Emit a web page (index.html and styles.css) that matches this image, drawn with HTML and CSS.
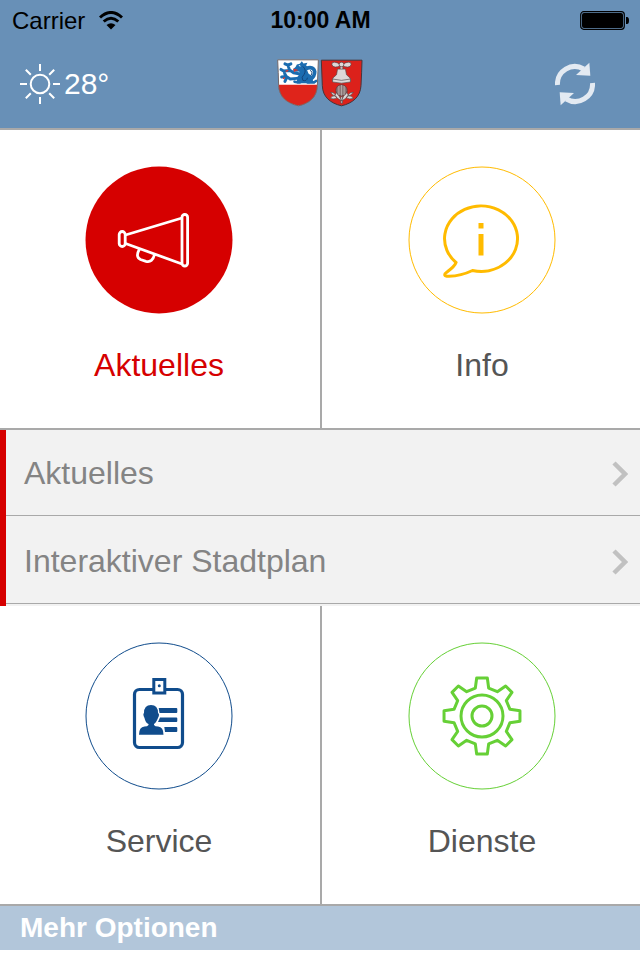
FILE: index.html
```
<!DOCTYPE html>
<html lang="de">
<head>
<meta charset="UTF-8">
<meta name="viewport" content="width=device-width, initial-scale=1">
<title>Stadt App</title>
<link rel="stylesheet" href="styles.css">
</head>
<body>
<header class="top">
  <div class="status">
    <div class="carrier">
      <span>Carrier</span>
      <svg class="wifi" viewBox="0 0 24 19" width="24" height="19">
        <path d="M1 6.5Q12-3.5 23 6.5M4.7 10.5Q12 4 19.3 10.5" fill="none" stroke="#000" stroke-width="3"/>
        <path d="M7.5 14Q12 10.5 16.5 14L12 18.5z"/>
      </svg>
    </div>
    <span class="time">10:00 AM</span>
    <svg class="battery" viewBox="0 0 49 20" width="49" height="20">
      <rect x=".7" y=".7" width="43.6" height="17.6" rx="3" fill="none" stroke="#000" stroke-width="1.2"/>
      <rect x="2" y="2" width="41" height="15" rx="2"/>
      <path d="M46 6h1q2 0 2 3.5T47 13h-1z"/>
    </svg>
  </div>
  <div class="bar">
    <div class="weather">
      <svg viewBox="0 0 40 40" width="40" height="40" fill="none" stroke="#fff" stroke-width="2">
        <circle cx="20" cy="20" r="9.3"/>
        <path d="M20 0v7M20 33v7M0 20h7M33 20h7M5.8 5.8l5 5M29.2 29.2l5 5M5.8 34.2l5-5M29.2 10.8l5-5"/>
      </svg>
      <span>28°</span>
    </div>
    <svg class="crests" viewBox="0 0 260 144" width="86" height="48">
      <path d="M2 2h123q-1 30-3 78c-1 35-25 54-57 61C30 134 6 113 5 80Q4 40 2 2z" fill="#fff"/>
      <path d="M5 77h117v6c-1 33-25 51-57 58C30 134 6 113 5 83z" fill="#df241b"/>
      <g fill="none" stroke="#1b6cb0" stroke-width="9" stroke-linecap="round" stroke-linejoin="round">
        <path d="M70 45L50 41 38 33 33 18M60 58L40 60 28 52 14 54M40 34l-20 2-8-5M33 18l-9-4M34 18l8-4M28 52l-5-9M28 58l-4 9"/>
        <path d="M92 70h20l6-4M70 70h-9l-8-2" stroke-width="8"/>
        <path d="M88 28q22-8 26 10 0 14-12 22" stroke-width="11"/>
      </g>
      <path d="M56 24l4-8 9-2 6-8 5 7 12-2-4 8 8 8-5 6 4 10 10 8 4 14-10 8H72l-12-8 2-12 8-10-3-6-10 1-9-4 2-5z" fill="#1b6cb0"/>
      <path d="M78 22q12 10 4 24-10 8-4 18 12 4 14-8M100 34q10 4 2 16" fill="none" stroke="#12457c" stroke-width="3"/>
      <path d="M62 34l-10-3 2 7M34 34l-8 3M24 56l-6 3" fill="none" stroke="#dd342b" stroke-width="4"/>
      <path d="M66 19l5 2" stroke="#fff" stroke-width="3"/>
      <path d="M2 2h123q-1 30-3 78c-1 35-25 54-57 61C30 134 6 113 5 80Q4 40 2 2z" fill="none" stroke="#736869" stroke-width="3"/>
      <path d="M134 3h123q-1 38-3 77c-2 34-25 53-59 61-34-8-57-27-58-61z" fill="#dc211b" stroke="#47343a" stroke-width="3"/>
      <g fill="#ddd8d8" stroke="#54474b" stroke-width="2">
        <path d="M190 17q-7-8-16-8t-8 7 10 8q9 0 14-5zM199 17q8-8 17-8t8 7-10 8q-9 0-15-5z"/>
        <path d="M191 22h8v12h-8z"/>
        <circle cx="195" cy="16" r="7"/>
        <path d="M183 30h24l3 17 11 10 1 8q-27 8-54 0l1-8 11-10z"/>
        <path d="M168 60q27 8 54 0v9q-27 7-54 0z"/>
        <path d="M193 113h5v20h-5z"/>
        <path d="M195 126q-14-6-19-16-8 2-14-10 12 0 14 8 6-10 3-10 10 13 16 28zM195 126q15-6 19-16 9 2 17-10-12 0-16 8-6-10-3-10-12 12-17 28zM176 111q-12-2-14 8 11 3 19-2zM214 111q14-2 16 8-12 3-20-2z"/>
      </g>
      <circle cx="195" cy="94" r="17" fill="#8a7777" stroke="#54373b" stroke-width="2"/>
      <path d="M187 81v27M195 78v32M203 81v27" fill="none" stroke="#c9bcbc" stroke-width="2"/>
    </svg>
    <button class="refresh" type="button" aria-label="Aktualisieren">
      <svg viewBox="0 0 120 132" width="40" height="44" fill="#e3eaf2">
        <path d="M7.5 69A52 52 0 0 1 86 21" fill="none" stroke="#e3eaf2" stroke-width="15"/>
        <path d="M103 2l3 39-43-2z"/>
        <path d="M112.500 63A52 52 0 0 1 34 111" fill="none" stroke="#e3eaf2" stroke-width="15"/>
        <path d="M17 130l-3-39 43 2z"/>
      </svg>
    </button>
  </div>
</header>

<main>
  <div class="tiles">
    <button class="tile tile-aktuelles" type="button" aria-expanded="true" aria-controls="submenu">
      <svg class="icon" viewBox="0 0 148 148">
        <circle cx="74" cy="74" r="73.500" fill="#d60000"/>
        <g fill="none" stroke="#fff" stroke-width="2.800">
          <rect x="34.200" y="65.500" width="6" height="15" rx="3"/>
          <rect x="97" y="48.500" width="5.600" height="51.500" rx="2.800"/>
          <path d="M40.500 69L97 52M40.500 77.500L97 98M54.500 83Q50 91 55.500 93.500L61 95.300Q67.500 97 69.500 88.500"/>
        </g>
      </svg>
      <span class="label">Aktuelles</span>
    </button>
    <button class="tile tile-info" type="button">
      <svg class="icon" viewBox="0 0 148 148">
        <circle cx="74" cy="74" r="73" fill="none" stroke="#ffbb00" stroke-width="1"/>
        <path d="M48 96.500A36.500 32.700 0 1 1 64.500 104.500Q53 110 41 110.300C36 110.500 35.500 108.500 39 106Q47 100 48 96.500z" fill="none" stroke="#ffbb00" stroke-width="3"/>
        <path d="M70.500 57h5v5.500h-5zM70.500 68h5v21.500h-5z" fill="#ffbb00"/>
      </svg>
      <span class="label">Info</span>
    </button>
  </div>

  <nav class="submenu" id="submenu">
    <a class="row" href="#aktuelles">
      <span>Aktuelles</span>
      <svg viewBox="0 0 16 26" width="16" height="26"><path d="M2 2l11 11L2 24" fill="none" stroke="#c1c1c1" stroke-width="4.500"/></svg>
    </a>
    <a class="row" href="#stadtplan">
      <span>Interaktiver Stadtplan</span>
      <svg viewBox="0 0 16 26" width="16" height="26"><path d="M2 2l11 11L2 24" fill="none" stroke="#c1c1c1" stroke-width="4.500"/></svg>
    </a>
  </nav>

  <div class="tiles">
    <button class="tile" type="button">
      <svg class="icon" viewBox="0 0 148 148">
        <circle cx="74" cy="74" r="73" fill="none" stroke="#104c8c" stroke-width="1"/>
        <rect x="49.500" y="47.500" width="48" height="58" rx="5" fill="none" stroke="#104c8c" stroke-width="3.200"/>
        <rect x="68.800" y="37.500" width="11" height="13.500" fill="#fff" stroke="#104c8c" stroke-width="3"/>
        <g fill="#104c8c" transform="translate(1 0)">
          <circle cx="73.300" cy="43.700" r="1.500"/>
          <path d="M65 63q7 0 7 8 2 1 0 5-2 5-4 6v1q1 1.500 4 1.500 5.500.5 5.500 8.200H53q0-7.700 5.500-8.200 3 0 4-1.500v-1q-3-1-4-6-2-4-.5-5 0-8 7-8z"/>
          <path d="M72.700 66h17.600q1 0 1 1v3q0 1-1 1H73.500zM74 75.400h16.300q1 0 1 1V79q0 1-1 1H72zM78.300 85h12q1 0 1 1v3q0 1-1 1H79z"/>
        </g>
      </svg>
      <span class="label">Service</span>
    </button>
    <button class="tile" type="button">
      <svg class="icon" viewBox="0 0 148 148">
        <g fill="none" stroke="#66d036">
          <circle cx="74" cy="74" r="73" stroke-width="1"/>
          <circle cx="74" cy="74" r="21" stroke-width="3"/>
          <circle cx="74" cy="74" r="10" stroke-width="3"/>
          <path transform="translate(74 74) scale(.333)" stroke-width="9" stroke-linejoin="round" d="M-16-114H16L20-84 46-73 71-90 90-71 73-46 84-20 114-16V16L84 20 73 46 90 71 71 90 46 73 20 84 16 114H-16L-20 84-46 73-71 90-90 71-73 46-84 20-114 16V-16L-84-20-73-46-90-71-71-90-46-73-20-84z"/>
        </g>
      </svg>
      <span class="label">Dienste</span>
    </button>
  </div>
</main>

<footer class="more"><a href="#optionen">Mehr Optionen</a></footer>
</body>
</html>
```
FILE: styles.css
```
*, *:before, *:after{
  box-sizing: border-box;
}
body{
  margin: 0;
  background: #fff;
  color: #555;
  font-family: "Liberation Sans", Arial, sans-serif;
  font-size: 32px;
}
svg{
  display: block;
}
a{
  color: inherit;
  text-decoration: none;
}
button{
  margin: 0;
  padding: 0;
  border: 0;
  background: none;
  color: inherit;
  font: inherit;
  cursor: pointer;
}

/* header */
.top{
  background: #6890b7;
  border-bottom: 2px solid #a9a9a9;
}
.status, .bar{
  display: grid;
  grid-template-columns: 1fr auto 1fr;
  align-items: center;
}
.status{
  height: 40px;
  padding: 1px 11px 0 12px;
  color: #000;
  font-size: 24px;
}
.carrier{
  display: flex;
  align-items: center;
  gap: 14px;
}
.time{
  font-size: 23px;
  font-weight: bold;
}
.battery{
  justify-self: end;
}
.bar{
  height: 88px;
  padding: 0 20px;
}
.weather{
  display: flex;
  align-items: center;
  gap: 4px;
  color: #fff;
  font-size: 30px;
}
.crests{
  margin-bottom: 2px;
}
.refresh{
  justify-self: end;
  margin-right: 25px;
}

/* tiles */
.tiles{
  display: grid;
  grid-template-columns: 1fr 1fr;
  border-bottom: 2px solid #a9a9a9;
}
.tile{
  display: flex;
  flex-direction: column;
  align-items: center;
  gap: 33px;
  padding: 36px 2px 44px 0;
}
.tile + .tile{
  padding-right: 0;
  padding-left: 2px;
  border-left: 2px solid #a9a9a9;
}
.icon{
  width: 148px;
  height: 148px;
}
.label{
  line-height: 37px;
}
.tile-aktuelles{
  color: #d60000;
}

/* submenu */
.submenu{
  padding-bottom: 2px;
  border-left: 6px solid #d60000;
  background: #f2f2f2;
  color: #848484;
}
.row{
  display: flex;
  justify-content: space-between;
  align-items: center;
  height: 88px;
  padding: 4px 12px 0 18px;
  border-bottom: 1px solid #a9a9a9;
}
.row:first-child{
  height: 86px;
  padding-top: 2px;
}

/* footer */
.more{
  padding: 0 20px;
  background: #b2c6da;
  color: #fff;
  font-size: 28px;
  font-weight: bold;
  line-height: 44px;
}
```
